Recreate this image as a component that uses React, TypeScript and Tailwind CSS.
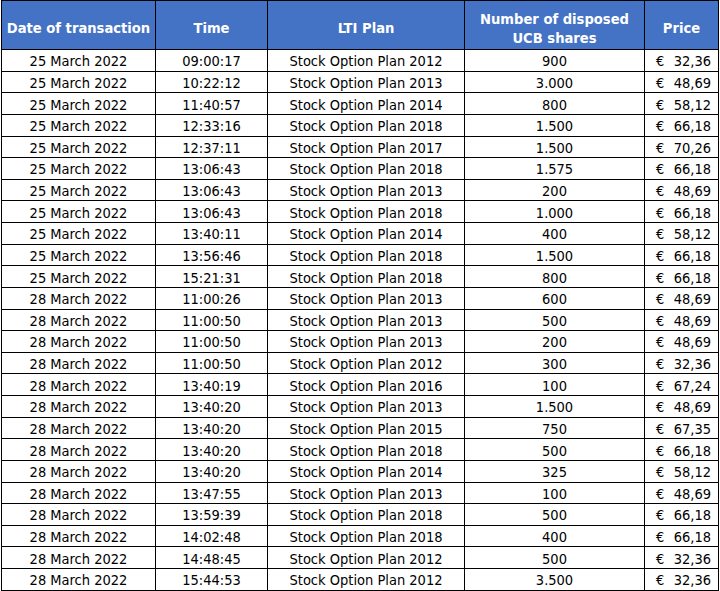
import React from "react";

const rows: [string, string, string, string, string][] = [
  ["25 March 2022", "09:00:17", "Stock Option Plan 2012", "900", "32,36"],
  ["25 March 2022", "10:22:12", "Stock Option Plan 2013", "3.000", "48,69"],
  ["25 March 2022", "11:40:57", "Stock Option Plan 2014", "800", "58,12"],
  ["25 March 2022", "12:33:16", "Stock Option Plan 2018", "1.500", "66,18"],
  ["25 March 2022", "12:37:11", "Stock Option Plan 2017", "1.500", "70,26"],
  ["25 March 2022", "13:06:43", "Stock Option Plan 2018", "1.575", "66,18"],
  ["25 March 2022", "13:06:43", "Stock Option Plan 2013", "200", "48,69"],
  ["25 March 2022", "13:06:43", "Stock Option Plan 2018", "1.000", "66,18"],
  ["25 March 2022", "13:40:11", "Stock Option Plan 2014", "400", "58,12"],
  ["25 March 2022", "13:56:46", "Stock Option Plan 2018", "1.500", "66,18"],
  ["25 March 2022", "15:21:31", "Stock Option Plan 2018", "800", "66,18"],
  ["28 March 2022", "11:00:26", "Stock Option Plan 2013", "600", "48,69"],
  ["28 March 2022", "11:00:50", "Stock Option Plan 2013", "500", "48,69"],
  ["28 March 2022", "11:00:50", "Stock Option Plan 2013", "200", "48,69"],
  ["28 March 2022", "11:00:50", "Stock Option Plan 2012", "300", "32,36"],
  ["28 March 2022", "13:40:19", "Stock Option Plan 2016", "100", "67,24"],
  ["28 March 2022", "13:40:20", "Stock Option Plan 2013", "1.500", "48,69"],
  ["28 March 2022", "13:40:20", "Stock Option Plan 2015", "750", "67,35"],
  ["28 March 2022", "13:40:20", "Stock Option Plan 2018", "500", "66,18"],
  ["28 March 2022", "13:40:20", "Stock Option Plan 2014", "325", "58,12"],
  ["28 March 2022", "13:47:55", "Stock Option Plan 2013", "100", "48,69"],
  ["28 March 2022", "13:59:39", "Stock Option Plan 2018", "500", "66,18"],
  ["28 March 2022", "14:02:48", "Stock Option Plan 2018", "400", "66,18"],
  ["28 March 2022", "14:48:45", "Stock Option Plan 2012", "500", "32,36"],
  ["28 March 2022", "15:44:53", "Stock Option Plan 2012", "3.500", "32,36"],
];

const th =
  "border border-black bg-[#4472c4] text-white font-bold text-[14.6px] leading-[19px] text-center align-middle p-0 pt-[5px]";
const td =
  "border border-black text-center align-middle p-0 pt-[3px] h-[21.64px] text-[14.5px] leading-[17px] text-black";

export default function App() {
  return (
    <div className="bg-white w-[720px] h-[591px] pl-[1px] font-['DejaVu_Sans',sans-serif] font-stretch-condensed">
      <table className="border-collapse table-fixed w-[717px]">
        <colgroup>
          <col className="w-[154px]" />
          <col className="w-[112px]" />
          <col className="w-[197px]" />
          <col className="w-[180px]" />
          <col className="w-[74px]" />
        </colgroup>
        <thead>
          <tr className="h-[49px]">
            <th className={th}>Date of transaction</th>
            <th className={th}>Time</th>
            <th className={th}>LTI Plan</th>
            <th className={th}>
              Number of disposed
              <br />
              UCB shares
            </th>
            <th className={th}>Price</th>
          </tr>
        </thead>
        <tbody>
          {rows.map((r, i) => (
            <tr key={i} className="h-[21.64px]">
              <td className={td}>{r[0]}</td>
              <td className={td}>{r[1]}</td>
              <td className={td}>{r[2]}</td>
              <td className={td}>{r[3]}</td>
              <td className={td}>
                <div className="flex justify-between pl-[11px] pr-[7px]">
                  <span>€</span>
                  <span>{r[4]}</span>
                </div>
              </td>
            </tr>
          ))}
        </tbody>
      </table>
    </div>
  );
}
